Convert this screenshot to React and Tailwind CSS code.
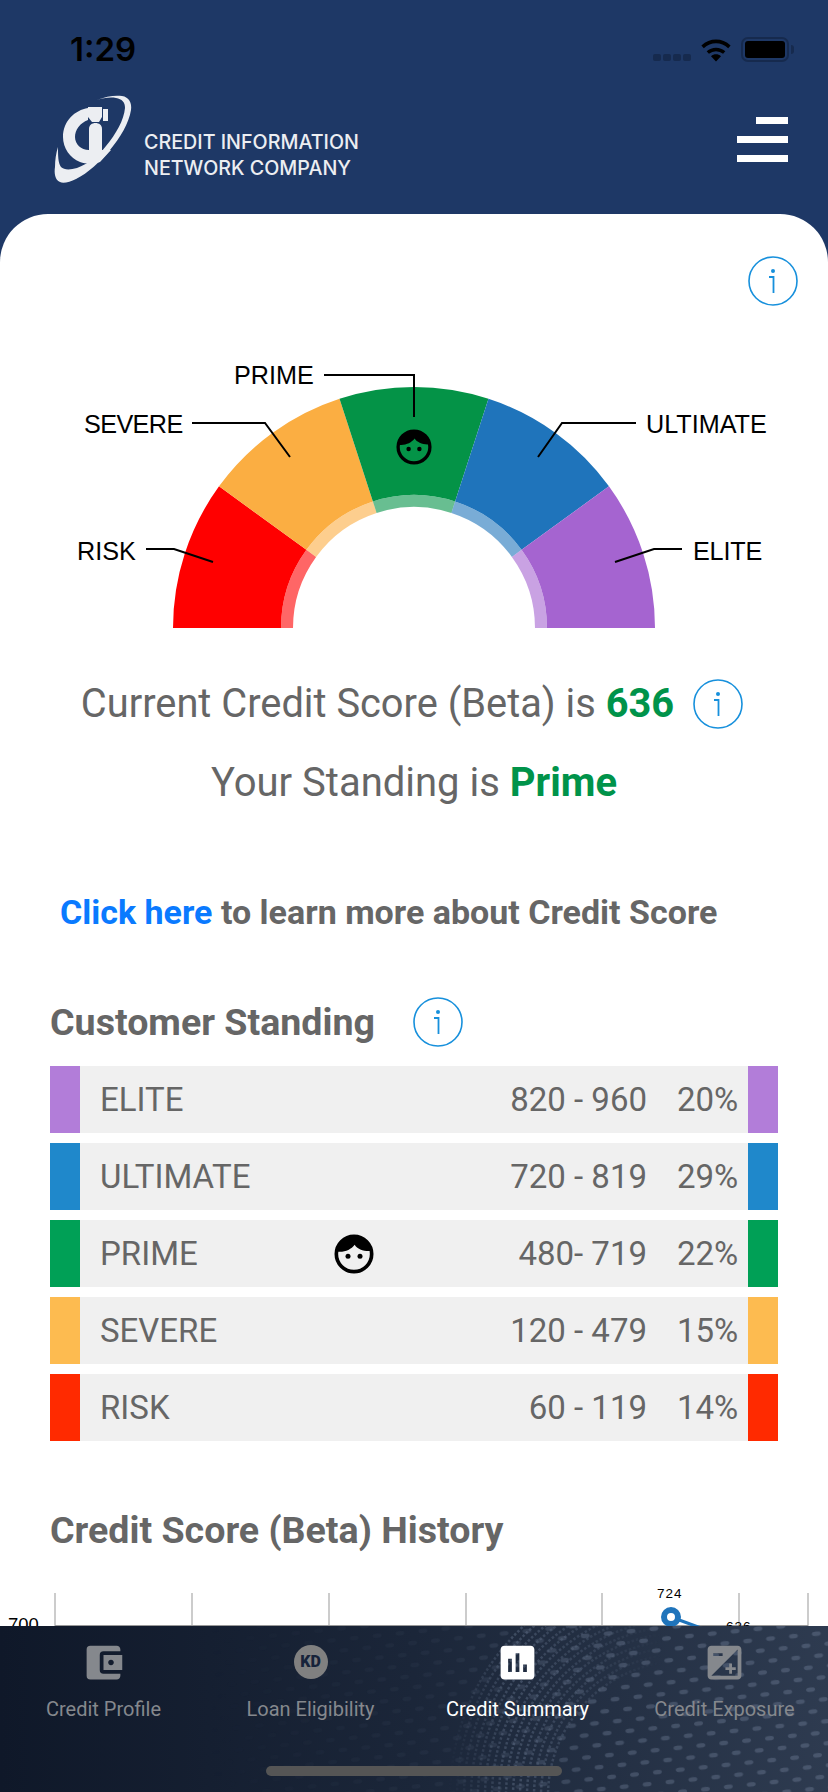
import { MdAccountBalanceWallet, MdAssessment, MdExposure } from 'react-icons/md';

const segments = [
  { color: '#ff0000', from: 180, to: 216 },
  { color: '#fbae42', from: 216, to: 252 },
  { color: '#049347', from: 252, to: 288 },
  { color: '#1f74bb', from: 288, to: 324 },
  { color: '#a564d0', from: 324, to: 360 },
];

const rows = [
  { name: 'ELITE', range: '820 - 960', pct: '20%', color: 'bg-[#b27dd9]' },
  { name: 'ULTIMATE', range: '720 - 819', pct: '29%', color: 'bg-[#1f88cb]' },
  { name: 'PRIME', range: '480- 719', pct: '22%', color: 'bg-[#00a056]', face: true },
  { name: 'SEVERE', range: '120 - 479', pct: '15%', color: 'bg-[#fdbb50]' },
  { name: 'RISK', range: '60 - 119', pct: '14%', color: 'bg-[#ff2a00]' },
];

const gridLines = [55, 192, 329, 466, 602, 739, 808];

function arcPath(r1, r2, from, to) {
  const cx = 414;
  const cy = 273;
  const pt = (r, a) => {
    const rad = (a * Math.PI) / 180;
    return `${(cx + r * Math.cos(rad)).toFixed(2)} ${(cy + r * Math.sin(rad)).toFixed(2)}`;
  };
  return `M${pt(r2, from)} A${r2} ${r2} 0 0 1 ${pt(r2, to)} L${pt(r1, to)} A${r1} ${r1} 0 0 0 ${pt(r1, from)} Z`;
}

function InfoIcon({ className }) {
  return (
    <svg viewBox="0 0 50 50" className={`w-[50px] h-[50px] shrink-0 ${className || ''}`}>
      <circle cx="25" cy="25" r="24" fill="none" stroke="#1790dc" strokeWidth="1.6" />
      <circle cx="25" cy="15" r="2" fill="#1790dc" />
      <path d="M21 21 H25.5 V37" fill="none" stroke="#1790dc" strokeWidth="1.8" />
    </svg>
  );
}

function Face({ size, x, y }) {
  const inner = (
    <>
      <circle cx="12" cy="12" r="10.6" fill="none" stroke="#000" strokeWidth="2.2" />
      <path d="M12 1.4 C6 1.4 2 6 1.6 10.5 C6 11.2 10.2 9.4 12.4 6.4 C14 9 18 10.6 22.4 10.2 C21.8 5.6 18 1.4 12 1.4 Z" fill="#000" />
      <circle cx="8.4" cy="13.4" r="1.5" fill="#000" />
      <circle cx="15.6" cy="13.4" r="1.5" fill="#000" />
    </>
  );
  if (x !== undefined) {
    return <svg x={x} y={y} width={size} height={size} viewBox="0 0 24 24">{inner}</svg>;
  }
  return <svg width={size} height={size} viewBox="0 0 24 24" className="shrink-0">{inner}</svg>;
}

function Logo() {
  return (
    <svg viewBox="0 0 100 100" className="w-[100px] h-[100px] shrink-0">
      <g fill="#eceef2">
        <path d="M47 10 C56 6 66 5 72 6 C79 7 82 13 81 20 C79 33 70 48 60 60 C50 72 38 83 26 89 C20 92 13 94 10 92 C5 90 4 83 5 77 C5 70 6 63 8 57 C8 65 8 73 11 77 C14 80 20 80 27 78 C38 74 48 66 56 56 C66 44 74 30 75 18 C75 12 72 9 66 8 C60 7 53 8 47 10 Z" />
        <path d="M38 18 V30 C30 33 25 40 25 47 C25 54 31 60 39 60 H61 L50 72 C44 74 36 74 30 72 C20 68 13 58 13 47 C13 31 25 20 38 18 Z" />
        <path d="M38 17 H52 V27 L49 32 H42 L38 27 Z" />
        <path d="M53 19 H58 V31 H53 Z" />
        <path d="M39 39 C39 35 42 33 45.5 33 C49 33 52 35 52 39 V60 H39 Z" />
      </g>
    </svg>
  );
}

// dotted texture and the fine swirl behind the tabs
function NavBackground() {
  const arcs = [];
  for (let r = 135; r < 235; r += 7) arcs.push(r);
  return (
    <svg className="absolute inset-0 w-full h-full" viewBox="0 0 828 166">
      <defs>
        <pattern id="navdots" width="23" height="22" patternUnits="userSpaceOnUse" patternTransform="rotate(-6)">
          <ellipse cx="6" cy="5" rx="4.5" ry="2.3" fill="#65738b" />
          <ellipse cx="17.5" cy="16" rx="4.5" ry="2.3" fill="#65738b" />
        </pattern>
        <linearGradient id="dotfade" x1="0" x2="1">
          <stop offset="0.25" stopColor="#fff" stopOpacity="0" />
          <stop offset="0.55" stopColor="#fff" stopOpacity="0.1" />
          <stop offset="0.72" stopColor="#fff" stopOpacity="0.45" />
          <stop offset="1" stopColor="#fff" stopOpacity="0.5" />
        </linearGradient>
        <linearGradient id="arcfade" x1="0" x2="1">
          <stop offset="0.54" stopColor="#fff" stopOpacity="0" />
          <stop offset="0.62" stopColor="#fff" stopOpacity="0.9" />
          <stop offset="0.72" stopColor="#fff" stopOpacity="0.5" />
          <stop offset="0.8" stopColor="#fff" stopOpacity="0" />
        </linearGradient>
        <mask id="dotmask">
          <rect width="828" height="166" fill="url(#dotfade)" />
        </mask>
        <mask id="arcmask">
          <rect width="828" height="166" fill="url(#arcfade)" />
        </mask>
      </defs>
      <rect width="828" height="166" fill="url(#navdots)" mask="url(#dotmask)" />
      <g mask="url(#arcmask)" fill="none">
        {arcs.map((r) => (
          <circle key={r} cx="683" cy="170" r={r} stroke="#5f6d85" strokeOpacity="0.55" strokeWidth="2.5" strokeDasharray="2.5 2" />
        ))}
      </g>
    </svg>
  );
}

function NavItem({ label, active, children }) {
  return (
    <div className={`flex-1 flex flex-col items-center ${active ? 'text-white' : 'text-[#85888d]'}`}>
      <div className="h-[46px] flex items-center justify-center">{children}</div>
      <span className="mt-[12px] text-[20px] leading-[24px] whitespace-nowrap">{label}</span>
    </div>
  );
}

export default function App() {
  return (
    <div className="relative w-[828px] h-[1792px] overflow-hidden bg-[#1e3866]" style={{ fontFamily: 'Roboto, sans-serif' }}>
      {/* status bar */}
      <div className="h-[90px] relative">
        <span className="absolute left-[70px] top-[29px] text-[33px] leading-[40px] font-semibold text-black" style={{ fontFamily: 'Inter, sans-serif' }}>
          1:29
        </span>
        <div className="absolute left-[653px] top-[54px] flex gap-[2.5px]">
          <div className="w-[7.5px] h-[7px] rounded-[2px] bg-[#162a4e]" />
          <div className="w-[7.5px] h-[7px] rounded-[2px] bg-[#162a4e]" />
          <div className="w-[7.5px] h-[7px] rounded-[2px] bg-[#162a4e]" />
          <div className="w-[7.5px] h-[7px] rounded-[2px] bg-[#162a4e]" />
        </div>
        <svg viewBox="0 0 32 25" className="absolute left-[700px] top-[37px] w-[32px] h-[25px]">
          <path d="M16 24.5 L11 19.2 C14 16.6 18 16.6 21 19.2 Z" fill="#000" />
          <path d="M7.8 15.6 C12.5 11.4 19.5 11.4 24.2 15.6" fill="none" stroke="#000" strokeWidth="3.4" />
          <path d="M2.6 9.8 C10.6 2.6 21.4 2.6 29.4 9.8" fill="none" stroke="#000" strokeWidth="3.6" />
        </svg>
        <div className="absolute left-[741px] top-[37px] w-[48px] h-[25px] rounded-[7px] border-[2px] border-[#162a4e] p-[2px]">
          <div className="w-full h-full rounded-[3px] bg-black" />
        </div>
        <div className="absolute left-[791px] top-[45px] w-[3px] h-[9px] rounded-r-[3px] bg-[#162a4e]" />
      </div>

      {/* logo + menu */}
      <div className="h-[124px] relative flex">
        <div className="ml-[50px] flex">
          <Logo />
          <div className="ml-[-6px] mt-[39px] text-[#eceef2] text-[19.7px] leading-[26px] font-medium whitespace-nowrap" style={{ fontFamily: 'Inter, sans-serif' }}>
            <div>CREDIT INFORMATION</div>
            <div>NETWORK COMPANY</div>
          </div>
        </div>
        <div className="ml-auto mr-[40px] mt-[27px] w-[51px] flex flex-col items-end gap-[12px]">
          <div className="w-[32px] h-[7px] bg-white" />
          <div className="w-[51px] h-[7px] bg-white" />
          <div className="w-[51px] h-[7px] bg-white" />
        </div>
      </div>

      {/* white card */}
      <div className="bg-white rounded-t-[48px] h-[1578px]">
        <div className="flex justify-end pt-[42px] pr-[30px]">
          <InfoIcon />
        </div>

        <svg viewBox="0 0 828 273" className="mt-[49px] w-[828px] h-[273px] block">
          {segments.map((s) => (
            <g key={s.color}>
              <path d={arcPath(133, 241, s.from, s.to)} fill={s.color} />
              <path d={arcPath(121, 133, s.from, s.to)} fill={s.color} fillOpacity="0.6" />
            </g>
          ))}
          <g fill="none" stroke="#000" strokeWidth="2">
            <path d="M324 20 H414 V62" />
            <path d="M192 68 H265 L290 102" />
            <path d="M146 194 H174 L213 207" />
            <path d="M636 68 H562 L538 102" />
            <path d="M682 194 H654 L615 207" />
          </g>
          <g fill="#000" fontSize="25.2" style={{ fontFamily: '"Liberation Sans", sans-serif' }}>
            <text x="234" y="29">PRIME</text>
            <text x="84" y="78" letterSpacing="-0.6">SEVERE</text>
            <text x="77" y="205">RISK</text>
            <text x="646" y="78">ULTIMATE</text>
            <text x="693" y="205" letterSpacing="-0.2">ELITE</text>
          </g>
          <Face size={36} x={396} y={74} />
        </svg>

        <div className="mt-[51px] h-[50px] pr-[4px] flex items-center justify-center text-[39.8px] text-[#666] whitespace-nowrap">
          <span>Current Credit Score (Beta) is&nbsp;</span>
          <span className="font-bold text-[#00934a]">636</span>
          <InfoIcon className="ml-[19px]" />
        </div>
        <div className="mt-[29px] h-[50px] flex items-center justify-center text-[40px] leading-[50px] text-[#666] whitespace-nowrap">
          <span>Your Standing is&nbsp;</span>
          <span className="font-bold text-[#00934a]">Prime</span>
        </div>
        <div className="mt-[79px] h-[50px] pl-[60px] flex items-center text-[34px] leading-[50px] font-bold text-[#666] whitespace-nowrap">
          <span className="text-[#0a7aff]">Click here</span>
          <span>&nbsp;to learn more about Credit Score</span>
        </div>

        <div className="mt-[60px] pl-[50px] h-[50px] flex items-center">
          <h2 className="text-[37.6px] leading-[50px] font-bold text-[#666]">Customer Standing</h2>
          <InfoIcon className="ml-[38px]" />
        </div>

        <div className="mt-[19px] mx-[50px] flex flex-col gap-[10px]">
          {rows.map((row) => (
            <div key={row.name} className="h-[67px] flex items-center bg-[#f0f0f0] text-[33px] text-[#666]">
              <div className={`w-[30px] h-full ${row.color}`} />
              <span className="ml-[20px] w-[234px]">{row.name}</span>
              {row.face && <Face size={40} />}
              <span className="ml-auto">{row.range}</span>
              <span className="ml-[30px] mr-[11px] w-[60px] text-right">{row.pct}</span>
              <div className={`w-[30px] h-full ${row.color}`} />
            </div>
          ))}
        </div>

        <h2 className="mt-[64px] pl-[50px] text-[37.6px] leading-[50px] font-bold text-[#666]">Credit Score (Beta) History</h2>

        <svg viewBox="0 0 828 70" className="mt-[28px] w-[828px] h-[70px] block">
          {gridLines.map((x) => (
            <line key={x} x1={x} x2={x} y1="10" y2="44" stroke="#bbb" strokeWidth="1.5" />
          ))}
          <line x1="55" x2="808" y1="43" y2="43" stroke="#999" strokeWidth="2" />
          <path d="M671 34 L720 52" fill="none" stroke="#1f74bb" strokeWidth="3" />
          <circle cx="671" cy="34" r="7" fill="#fff" stroke="#1f74bb" strokeWidth="6" />
          <g fill="#000" style={{ fontFamily: '"Liberation Sans", sans-serif' }}>
            <text x="8" y="48" fontSize="18.5">700</text>
            <text x="657" y="15" fontSize="13.5" letterSpacing="1">724</text>
            <text x="726" y="48" fontSize="13.5" letterSpacing="1">636</text>
          </g>
        </svg>
      </div>

      {/* bottom tabs */}
      <div className="absolute left-0 right-0 bottom-0 h-[166px] bg-gradient-to-r from-[#0f1829] via-[#1b2639] to-[#2e3b50]">
        <NavBackground />
        <div className="relative flex pt-[13px]">
          <NavItem label="Credit Profile"><MdAccountBalanceWallet size={45} /></NavItem>
          <NavItem label="Loan Eligibility">
            <div className="w-[34px] h-[34px] rounded-full bg-[#808080] flex items-center justify-center text-[16px] font-black text-[#17233a]">KD</div>
          </NavItem>
          <NavItem label="Credit Summary" active><MdAssessment size={45} /></NavItem>
          <NavItem label="Credit Exposure"><MdExposure size={45} /></NavItem>
        </div>
        <div className="absolute left-[266px] top-[140px] w-[296px] h-[10px] rounded-full bg-[#555]" />
      </div>
    </div>
  );
}
